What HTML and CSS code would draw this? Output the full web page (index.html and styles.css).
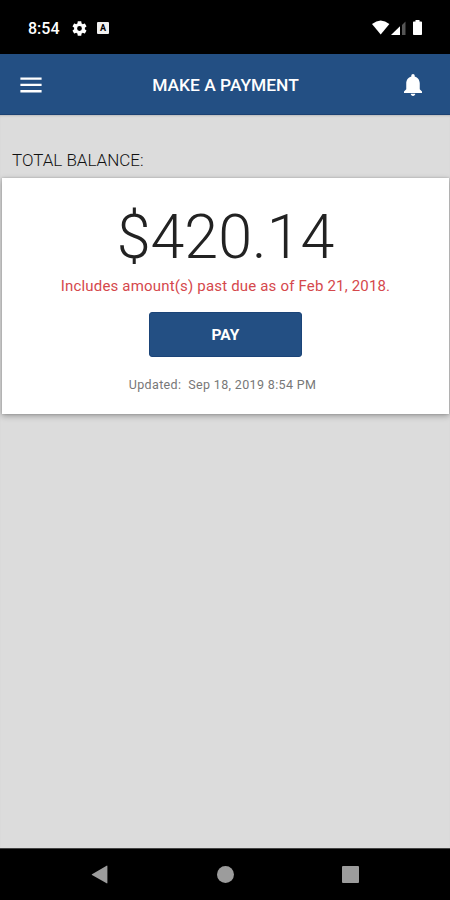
FILE: index.html
```html
<!DOCTYPE html>
<html lang="en">

<head>
    <meta charset="UTF-8">
    <meta name="viewport" content="width=device-width, initial-scale=1.0">
    <title>Make a Payment</title>
    <link rel="stylesheet" href="styles.css">
</head>

<body>
    <div class="phone">
        <div class="status">
            <span class="time">8:54</span>
            <svg class="gear" width="15" height="15" viewBox="2 2 20 20">
                <path fill="#fff" d="M19.14 12.94c.04-.3.06-.61.06-.94 0-.32-.02-.64-.07-.94l2.03-1.58c.18-.14.23-.41.12-.61l-1.92-3.32c-.12-.22-.37-.29-.59-.22l-2.39.96c-.5-.38-1.03-.7-1.62-.94l-.36-2.54c-.04-.24-.24-.41-.48-.41h-3.84c-.24 0-.43.17-.47.41l-.36 2.54c-.59.24-1.13.57-1.62.94l-2.39-.96c-.22-.08-.47 0-.59.22L2.74 8.87c-.12.21-.08.47.12.61l2.03 1.58c-.05.3-.09.63-.09.94s.02.64.07.94l-2.03 1.58c-.18.14-.23.41-.12.61l1.92 3.32c.12.22.37.29.59.22l2.39-.96c.5.38 1.03.7 1.62.94l.36 2.54c.05.24.24.41.48.41h3.84c.24 0 .44-.17.47-.41l.36-2.54c.59-.24 1.13-.56 1.62-.94l2.39.96c.22.08.47 0 .59-.22l1.92-3.32c.12-.22.07-.47-.12-.61l-2.01-1.58zM12 15.2a3.2 3.2 0 1 1 0-6.4 3.2 3.2 0 0 1 0 6.4z"/>
            </svg>
            <span class="badge">A</span>
            <svg class="signals" width="52" height="16" viewBox="0 0 52 16">
                <path fill="#fff" d="M0 4Q8.7-3 17.4 4L8.7 14.5z"/>
                <path fill="#fff" d="M19 15l9-8.8V15z"/>
                <path fill="#555" d="M30 5l3.5-3.5V15H30z"/>
                <path fill="#fff" d="M43.5 1.5V0h4v1.5h1.7c.5 0 .8.3.8.8v12c0 .5-.3.8-.8.8h-7.4c-.5 0-.8-.3-.8-.8v-12c0-.5.3-.8.8-.8z"/>
            </svg>
        </div>
        <div class="header">
            <svg class="menu" width="22" height="16" viewBox="0 0 22 16">
                <path fill="#fff" d="M.4.4h21.2v2.4H.4zM.4 6.7h21.2v2.4H.4zM.4 13h21.2v2.4H.4z"/>
            </svg>
            <h1>MAKE A PAYMENT</h1>
            <svg class="bell" width="18" height="22" viewBox="4 2.5 16 19.5" preserveAspectRatio="none">
                <path fill="#fff" d="M12 22c1.1 0 2-.9 2-2h-4c0 1.1.89 2 2 2zm6-6v-5c0-3.07-1.64-5.64-4.5-6.32V4c0-.83-.67-1.5-1.5-1.5s-1.5.67-1.5 1.5v.68C7.63 5.36 6 7.92 6 11v5l-2 2v1.3h16V18l-2-2z"/>
            </svg>
        </div>
        <div class="content">
            <h2>TOTAL BALANCE:</h2>
            <div class="card">
                <div class="amount">$420.14</div>
                <p class="due">Includes amount(s) past due as of Feb 21, 2018.</p>
                <button class="pay">PAY</button>
                <p class="updated">Updated:&nbsp; Sep 18, 2019 8:54 PM</p>
            </div>
        </div>
        <div class="nav">
            <svg width="18" height="20" viewBox="0 0 18 20">
                <path fill="#9c9c9c" d="M1 9.2L15.6.7q.8-.4.8.5v16.6q0 .9-.8.5L1 9.9q-.6-.3 0-.7z"/>
            </svg>
            <span class="home"></span>
            <span class="recent"></span>
        </div>
    </div>
</body>

</html>
```
FILE: styles.css
```css
* {
    margin: 0;
    padding: 0;
    box-sizing: border-box;
}

body {
    font-family: Roboto, "Liberation Sans", sans-serif;
    background-color: #000;
}

.phone {
    width: 450px;
    height: 900px;
    display: flex;
    flex-direction: column;
    overflow: hidden;
    white-space: nowrap;
}

.status {
    height: 54px;
    padding: 2px 26px 0 28px;
    display: flex;
    align-items: center;
    color: #fff;
}

.time {
    width: 44px;
    font-size: 16px;
    font-weight: 500;
}

.badge {
    width: 12px;
    height: 12px;
    margin-left: 10px;
    border-radius: 1px;
    background-color: #f0f0f0;
    color: #000;
    font-size: 9px;
    font-weight: 700;
    line-height: 12px;
    text-align: center;
}

.signals {
    margin-left: auto;
}

.header {
    height: 61px;
    padding: 2px 28px 0 20px;
    display: flex;
    align-items: center;
    justify-content: space-between;
    background-color: #234f83;
    border-bottom: 1px solid #1c4273;
    color: #fff;
}

.header h1 {
    padding-left: 5px;
    font-size: 17.4px;
    font-weight: 500;
}

.content {
    flex: 1;
    background-color: #dcdcdc;
    box-shadow: inset 0 2px 2px -1px #bbb;
}

.content h2 {
    height: 63px;
    padding: 34px 12px 0;
    color: #111;
    font-size: 17px;
    font-weight: 300;
    line-height: 22px;
}

.card {
    height: 236px;
    margin: 0 1px 0 2px;
    padding-top: 23px;
    display: flex;
    flex-direction: column;
    align-items: center;
    background-color: #fff;
    box-shadow: 0 2px 6px rgba(0, 0, 0, .3), 0 0 2px rgba(0, 0, 0, .2);
}

.amount {
    height: 72px;
    color: #222;
    font-size: 61px;
    font-weight: 300;
    line-height: 72px;
}

.due {
    height: 24px;
    padding-top: 1px;
    color: #d5484c;
    font-size: 15px;
    letter-spacing: .18px;
    line-height: 24px;
}

.pay {
    width: 153px;
    height: 45px;
    margin-top: 15px;
    border: 1px solid #1b4478;
    border-radius: 3px;
    background-color: #234f83;
    color: #fff;
    font-family: inherit;
    font-size: 15.5px;
    font-weight: 700;
}

.updated {
    margin-top: 18px;
    padding-right: 6px;
    color: #777;
    font-size: 12.5px;
    letter-spacing: .35px;
    line-height: 20px;
}

.nav {
    height: 52px;
    padding: 0 91px;
    display: flex;
    align-items: center;
    justify-content: space-between;
    background-color: #000;
    border-top: 1px solid #444;
}

.home {
    width: 17px;
    height: 17px;
    border-radius: 50%;
    background-color: #9c9c9c;
}

.recent {
    width: 17px;
    height: 17px;
    border-radius: 1px;
    background-color: #9c9c9c;
}
```
